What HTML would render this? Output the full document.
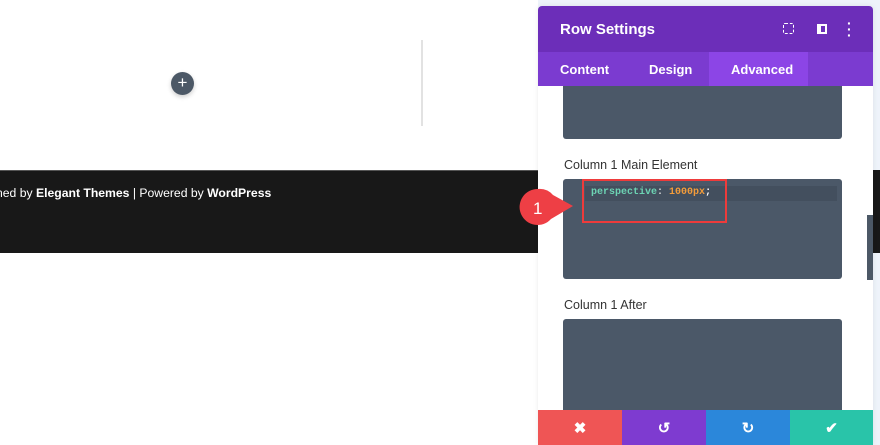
<!DOCTYPE html><html><head><style>
*{margin:0;padding:0;box-sizing:border-box}
body{width:880px;height:445px;overflow:hidden;background:#fff;font-family:"Liberation Sans",sans-serif;position:relative}
.a{position:absolute}
.ta{position:absolute;left:563px;width:279px;background:#4b5868;border-radius:3px}
.lbl{position:absolute;left:564px;font-size:12.5px;color:#333}
.btn{position:absolute;top:410px;height:35px;width:84px;color:#fff;font-size:15px;font-weight:bold;display:flex;align-items:center;justify-content:center}
</style></head><body>
<div class="a" style="left:421px;top:40px;width:2px;height:86px;background:#e2e2e2"></div>
<div class="a" style="left:171px;top:72px;width:23px;height:23px;border-radius:50%;background:#4c5866;color:#fff;font-size:17px;line-height:22px;text-align:center;box-shadow:0 2px 5px rgba(0,0,0,.2)">+</div>
<div class="a" style="left:0;top:170px;width:880px;height:83px;background:#181818;border-top:1px solid #555"></div>
<div class="a" style="left:-4px;top:186px;color:#fff;font-size:12.2px;white-space:nowrap">ned by <b>Elegant Themes</b> | Powered by <b>WordPress</b></div>
<div class="a" style="left:538px;top:0;width:342px;height:445px;background:#eef3fa"></div>
<div class="a" style="left:873px;top:170px;width:7px;height:83px;background:#181818"></div>
<div class="a" style="left:538px;top:6px;width:335px;height:439px;background:#fff;border-radius:4px 4px 0 0;overflow:hidden;box-shadow:0 0 6px rgba(0,0,0,.08)">
<div class="a" style="left:0;top:0;width:335px;height:46px;background:#6c2eb9"></div>
<div class="a" style="left:22px;top:15px;color:#fff;font-size:15px;font-weight:bold">Row Settings</div>
<div class="a" style="left:245px;top:17px;width:11px;height:11px;border:1.5px dashed #fff;border-radius:2px"></div>
<div class="a" style="left:279px;top:18px;width:10px;height:10px;border:2px solid #fff;border-left-width:4px"></div>
<div class="a" style="left:309px;top:14px;color:#fff;font-size:14px;font-weight:bold;line-height:6px">·<br>·<br>·</div>
<div class="a" style="left:0;top:46px;width:335px;height:34px;background:#7b3bd0"></div>
<div class="a" style="left:171px;top:46px;width:99px;height:34px;background:#8c45e6"></div>
<div class="a" style="left:22px;top:56px;color:#fff;font-size:13px;font-weight:bold">Content</div>
<div class="a" style="left:111px;top:56px;color:#fff;font-size:13px;font-weight:bold">Design</div>
<div class="a" style="left:193px;top:56px;color:#fff;font-size:13px;font-weight:bold">Advanced</div>
</div>
<div class="ta" style="top:86px;height:53px;border-radius:0 0 3px 3px"></div>
<div class="lbl" style="top:158px">Column 1 Main Element</div>
<div class="ta" style="top:179px;height:100px"></div>
<div class="a" style="left:585px;top:186px;width:252px;height:15px;background:#434f5e"></div>
<div class="a" style="left:591px;top:187px;font-family:'Liberation Mono',monospace;font-size:10px;font-weight:bold;color:#6cd3b3">perspective<span style="color:#ddd">:</span> <span style="color:#f39c3a">1000px</span><span style="color:#fff">;</span></div>
<div class="a" style="left:582px;top:179px;width:145px;height:44px;border:2px solid #ee3b3b"></div>
<div class="a" style="left:867px;top:215px;width:6px;height:65px;background:#4c5866"></div>
<svg class="a" style="left:515px;top:186px" width="62" height="46"><path d="M23 3 A18 18 0 1 0 36 33 L58 20 L38 9 A18 18 0 0 0 23 3Z" fill="#ee3f45" /></svg>
<div class="a" style="left:533px;top:199px;color:#fff;font-size:17px">1</div>
<div class="lbl" style="top:298px">Column 1 After</div>
<div class="ta" style="top:319px;height:100px"></div>
<div class="btn" style="left:538px;background:#ef5555">✖</div>
<div class="btn" style="left:622px;background:#7e3bd0">↺</div>
<div class="btn" style="left:706px;background:#2b87da">↻</div>
<div class="btn" style="left:790px;width:83px;background:#29c4a9">✔</div>
</body></html>
